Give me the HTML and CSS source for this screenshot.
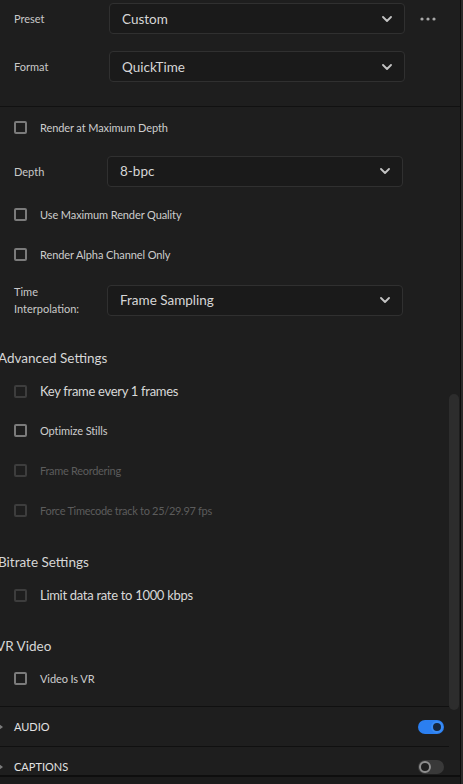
FILE: index.html
```html
<!DOCTYPE html>
<html>
<head>
<meta charset="utf-8">
<link rel="stylesheet" href="styles.css">
</head>
<body>
<div class="frame">
  <div class="main">
    <div class="top">
      <div class="frow">
        <div class="label">Preset</div>
        <div class="select sel-top"><span>Custom</span><svg class="chev" viewBox="0 0 10 6"><path d="M1 1 L5 5 L9 1"/></svg></div>
        <svg class="dots" viewBox="0 0 16 4"><circle cx="2" cy="2" r="1.6"/><circle cx="8" cy="2" r="1.6"/><circle cx="14" cy="2" r="1.6"/></svg>
      </div>
      <div class="frow frow2">
        <div class="label">Format</div>
        <div class="select sel-top"><span>QuickTime</span><svg class="chev" viewBox="0 0 10 6"><path d="M1 1 L5 5 L9 1"/></svg></div>
      </div>
    </div>
    <div class="scroller">
      <div class="content">
        <div class="row r40"><span class="cb"></span><span class="ctext">Render at Maximum Depth</span></div>
        <div class="row r48">
          <div class="label">Depth</div>
          <div class="select sel-low"><span>8-bpc</span><svg class="chev" viewBox="0 0 10 6"><path d="M1 1 L5 5 L9 1"/></svg></div>
        </div>
        <div class="row r38"><span class="cb"></span><span class="ctext">Use Maximum Render Quality</span></div>
        <div class="row r42"><span class="cb"></span><span class="ctext">Render Alpha Channel Only</span></div>
        <div class="row r50">
          <div class="label two">Time<br>Interpolation:</div>
          <div class="select sel-low"><span>Frame Sampling</span><svg class="chev" viewBox="0 0 10 6"><path d="M1 1 L5 5 L9 1"/></svg></div>
        </div>
        <div class="heading h-adv">Advanced Settings</div>
        <div class="row r40"><span class="cb dim"></span><span class="ctext big">Key frame every 1 frames</span></div>
        <div class="row r39"><span class="cb"></span><span class="ctext">Optimize Stills</span></div>
        <div class="row r40"><span class="cb dim"></span><span class="ctext off">Frame Reordering</span></div>
        <div class="row r40"><span class="cb dim"></span><span class="ctext off">Force Timecode track to 25/29.97 fps</span></div>
        <div class="heading h-bit">Bitrate Settings</div>
        <div class="row r40"><span class="cb dim"></span><span class="ctext big">Limit data rate to 1000 kbps</span></div>
        <div class="heading h-vr">VR Video</div>
        <div class="row r38"><span class="cb"></span><span class="ctext">Video Is VR</span></div>
        <div class="spacer"></div>
        <div class="srow">
          <span class="tri"></span><span class="stitle">AUDIO</span>
          <span class="toggle on"><span class="knob"></span></span>
        </div>
        <div class="srow">
          <span class="tri"></span><span class="stitle">CAPTIONS</span>
          <span class="toggle"><span class="knob"></span></span>
        </div>
      </div>
      <div class="track"><div class="thumb"></div></div>
    </div>
    <div class="footer"></div>
  </div>
  <div class="edge"></div>
</div>
</body>
</html>
```
FILE: styles.css
```css
* { box-sizing: border-box; }
html, body {
  margin: 0;
  padding: 0;
  width: 463px;
  height: 784px;
  overflow: hidden;
  background: #1e1e1e;
}
body {
  font-family: Lato, "Noto Sans", sans-serif;
  color: #cfcfcf;
}
.frame {
  display: flex;
  width: 463px;
  height: 784px;
}
.main {
  flex: 1;
  display: flex;
  flex-direction: column;
  min-width: 0;
}
.edge {
  width: 3px;
  background: #2a2a2a;
  border-left: 1px solid #0c0c0c;
}
.top {
  height: 107px;
  flex: none;
  padding: 3px 0 0 14px;
  border-bottom: 1px solid #111;
}
.frow {
  display: flex;
  align-items: center;
  height: 31px;
}
.frow2 { margin-top: 17px; }
.label {
  width: 95px;
  flex: none;
  font-size: 11px;
  color: #c9c9c9;
}
.label.two { line-height: 17px; }
.select {
  display: flex;
  align-items: center;
  justify-content: space-between;
  height: 31px;
  border: 1px solid #303030;
  border-radius: 4px;
  background: #1a1a1a;
  padding: 0 12px 0 12px;
  font-size: 13.5px;
  color: #d6d6d6;
}
.sel-top { width: 296px; }
.sel-low { width: 296px; margin-left: -2px; }
.chev {
  width: 10px;
  height: 6px;
  fill: none;
  stroke: #c4c4c4;
  stroke-width: 1.8;
  stroke-linecap: round;
  stroke-linejoin: round;
}
.dots {
  width: 16px;
  height: 4px;
  margin-left: 15px;
  fill: #a8a8a8;
}
.scroller {
  flex: 1;
  display: flex;
  min-height: 0;
  overflow: hidden;
}
.content {
  width: 449px;
  flex: none;
  display: flex;
  flex-direction: column;
}
.track {
  width: 11px;
  flex: none;
  padding-top: 287px;
}
.thumb {
  width: 10px;
  height: 316px;
  background: #2d2d2d;
  border-radius: 5px;
}
.row {
  display: flex;
  align-items: center;
  padding-left: 14px;
  flex: none;
}
.r38 { height: 38px; }
.r39 { height: 39px; }
.r40 { height: 40px; }
.r42 { height: 42px; }
.r48 { height: 48px; }
.r50 { height: 50px; }
.cb {
  width: 13px;
  height: 13px;
  border: 2px solid #7b7b7b;
  border-radius: 2px;
  flex: none;
  margin-right: 13px;
}
.cb.dim { border-color: #3d3d3d; }
.ctext {
  font-size: 11px;
  letter-spacing: -0.1px;
  color: #cdcdcd;
}
.ctext.big {
  font-size: 13px;
  letter-spacing: -0.3px;
  color: #d8d8d8;
}
.ctext.off { color: #5c5c5c; letter-spacing: -0.3px; }
.heading {
  height: 26px;
  display: flex;
  align-items: center;
  margin-left: -2px;
  font-size: 13.5px;
  color: #d6d6d6;
  flex: none;
}
.h-adv { margin-top: 20px; }
.h-bit { margin-top: 19px; }
.h-vr { margin-top: 18px; margin-left: -4px; }
.spacer { height: 9px; flex: none; }
.srow {
  height: 40px;
  flex: none;
  display: flex;
  align-items: center;
  border-top: 1px solid #101010;
  padding-right: 5px;
}
.tri {
  width: 0;
  height: 0;
  border-top: 3px solid transparent;
  border-bottom: 3px solid transparent;
  border-left: 4px solid #7a7a7a;
  margin-left: -1px;
  margin-right: 11px;
}
.stitle {
  flex: 1;
  font-size: 11px;
  color: #e2e2e2;
}
.toggle {
  width: 26px;
  height: 14px;
  border-radius: 7px;
  background: #393939;
  display: flex;
  align-items: center;
  padding: 0 1px;
}
.toggle .knob {
  width: 12px;
  height: 12px;
  border-radius: 50%;
  background: #1e1e1e;
  border: 2px solid #8e8e8e;
}
.toggle.on {
  background: #2b7ff0;
  justify-content: flex-end;
}
.toggle.on .knob {
  background: #16263c;
  border-color: #3a8cf5;
}
.footer {
  height: 9px;
  flex: none;
  background: #1b1b1b;
  border-top: 2px solid #0e0e0e;
}
```
